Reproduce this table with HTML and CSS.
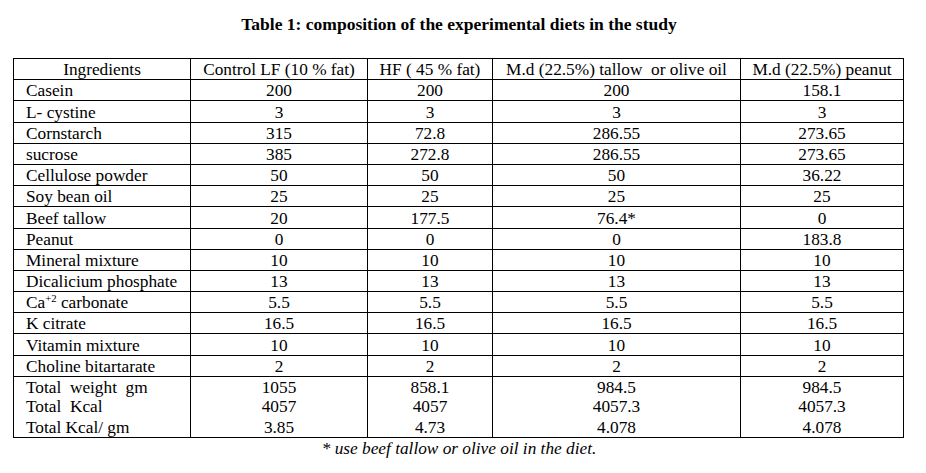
FILE: index.html
```html
<!DOCTYPE html>
<html>
<head>
<meta charset="utf-8">
<link rel="stylesheet" href="styles.css">
</head>
<body>
<div class="page">
  <div class="title">Table 1: composition of the experimental diets in the study</div>
  <table class="diet">
    <colgroup>
      <col class="c1"><col class="c2"><col class="c3"><col class="c4"><col class="c5">
    </colgroup>
    <thead>
      <tr class="head">
        <th>Ingredients</th>
        <th>Control LF (10 % fat)</th>
        <th>HF ( 45 % fat)</th>
        <th>M.d (22.5%) tallow&nbsp; or olive oil</th>
        <th>M.d (22.5%) peanut</th>
      </tr>
    </thead>
    <tbody>
      <tr><td>Casein</td><td>200</td><td>200</td><td>200</td><td>158.1</td></tr>
      <tr><td>L- cystine</td><td>3</td><td>3</td><td>3</td><td>3</td></tr>
      <tr><td>Cornstarch</td><td>315</td><td>72.8</td><td>286.55</td><td>273.65</td></tr>
      <tr><td>sucrose</td><td>385</td><td>272.8</td><td>286.55</td><td>273.65</td></tr>
      <tr><td>Cellulose powder</td><td>50</td><td>50</td><td>50</td><td>36.22</td></tr>
      <tr><td>Soy bean oil</td><td>25</td><td>25</td><td>25</td><td>25</td></tr>
      <tr><td>Beef tallow</td><td>20</td><td>177.5</td><td>76.4*</td><td>0</td></tr>
      <tr><td>Peanut</td><td>0</td><td>0</td><td>0</td><td>183.8</td></tr>
      <tr><td>Mineral mixture</td><td>10</td><td>10</td><td>10</td><td>10</td></tr>
      <tr><td>Dicalicium phosphate</td><td>13</td><td>13</td><td>13</td><td>13</td></tr>
      <tr><td>Ca<sup>+2</sup> carbonate</td><td>5.5</td><td>5.5</td><td>5.5</td><td>5.5</td></tr>
      <tr><td>K citrate</td><td>16.5</td><td>16.5</td><td>16.5</td><td>16.5</td></tr>
      <tr><td>Vitamin mixture</td><td>10</td><td>10</td><td>10</td><td>10</td></tr>
      <tr><td>Choline bitartarate</td><td>2</td><td>2</td><td>2</td><td>2</td></tr>
      <tr class="tot t1"><td>Total&nbsp; weight&nbsp; gm</td><td>1055</td><td>858.1</td><td>984.5</td><td>984.5</td></tr>
      <tr class="tot t2"><td>Total&nbsp; Kcal</td><td>4057</td><td>4057</td><td>4057.3</td><td>4057.3</td></tr>
      <tr class="tot t3"><td>Total Kcal/ gm</td><td>3.85</td><td>4.73</td><td>4.078</td><td>4.078</td></tr>
    </tbody>
  </table>
  <div class="note">* use beef tallow or olive oil in the diet.</div>
</div>
</body>
</html>
```
FILE: styles.css
```css
html, body {
  margin: 0;
  padding: 0;
  background: #ffffff;
}
.page {
  width: 926px;
  color: #000;
  font-family: "Liberation Serif", "Times New Roman", serif;
}
.title {
  padding-top: 14px;
  width: 918px;
  text-align: center;
  font-weight: bold;
  font-size: 17.5px;
  line-height: 20px;
}
.diet {
  margin-top: 24px;
  margin-left: 13px;
  width: 891px;
  border-collapse: collapse;
  table-layout: fixed;
  font-size: 17.3px;
}
.c1 { width: 177px; }
.c2 { width: 177px; }
.c3 { width: 125px; }
.c4 { width: 248px; }
.c5 { width: 163px; }
.diet th, .diet td {
  border: 1px solid #000;
  padding: 0;
  line-height: 18px;
  vertical-align: bottom;
  text-align: center;
  font-weight: normal;
  white-space: nowrap;
}
.diet tr { height: 21.2px; }
.diet td:first-child {
  text-align: left;
  padding-left: 12px;
}
.diet th:first-child { padding-left: 0; }
.diet sup {
  font-size: 0.62em;
  line-height: 0;
  vertical-align: 0.6em;
}
.diet tr.t1 { height: 21px; }
.diet tr.t2 { height: 19px; }
.diet tr.t3 { height: 21px; }
.diet tr.t2 td, .diet tr.t3 td { border-top: hidden; }
.diet tr.t2 td { vertical-align: middle; }
.note {
  width: 918px;
  text-align: center;
  font-style: italic;
  font-size: 17.3px;
  line-height: 20px;
  margin-top: 1px;
}
```
